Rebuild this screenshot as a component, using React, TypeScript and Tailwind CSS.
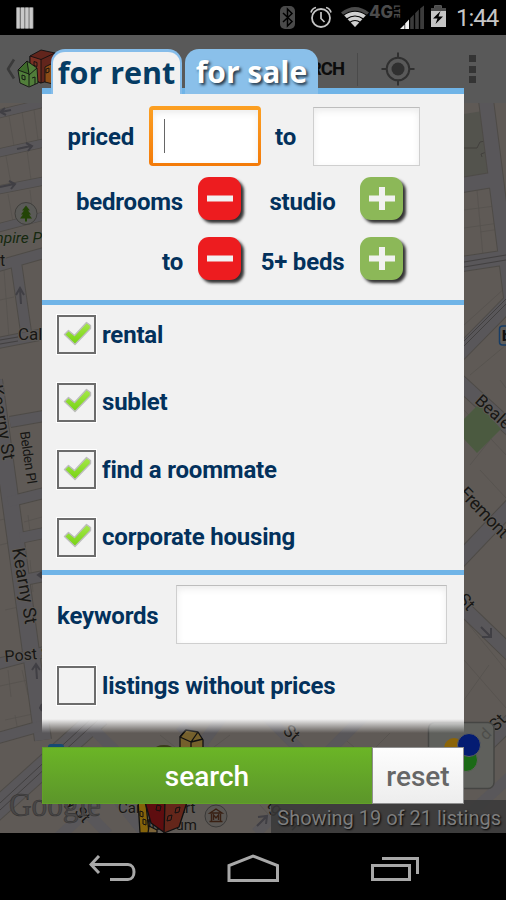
import React, { useState } from 'react';
import clsx from 'clsx';

interface RentalType {
  id: string;
  label: string;
}

const RENTAL_TYPES: RentalType[] = [
  { id: 'rental', label: 'rental' },
  { id: 'sublet', label: 'sublet' },
  { id: 'roommate', label: 'find a roommate' },
  { id: 'corporate', label: 'corporate housing' },
];

const StatusBar = () => (
  <div className="flex h-[35px] shrink-0 items-center bg-black pl-4">
    <svg width="18" height="22" viewBox="0 0 18 22">
      <rect x="0.5" y="0.5" width="17" height="21" fill="#777" />
      {[0.5, 5, 9.3, 13.6].map((x) => (
        <rect key={x} x={x} y="0.5" width="3.2" height="21" fill="#c9c9c9" />
      ))}
    </svg>
    <svg className="ml-[240px]" width="178" height="35" viewBox="274 0 178 35" fill="none">
      <rect x="280" y="6" width="15" height="23" rx="5" fill="#4a4a4a" />
      <path d="M283 13l9 8.5-4.5 4.5V9l4.5 4.5-9 8.5" stroke="#000" strokeWidth="1.5" />
      <circle cx="321" cy="18" r="9" stroke="#c4c4c4" strokeWidth="1.8" />
      <path d="M321 12v6.5l3.5 3.5M311 12.5q1-4 5-5M331 12.5q-1-4-5-5" stroke="#c4c4c4" strokeWidth="1.7" />
      <path d="M341 12.5q14-11 28 0L355 27z" fill="#4a4a4a" />
      <path d="M344 15q11-8 22 0L355 27z" fill="#d0d0d0" />
      <path d="M343 15.5q12-8.5 24 0M346.5 19q8.5-6 17 0M349.5 22.5q5.5-4 11 0" stroke="#000" strokeWidth="1.2" />
      <text x="369" y="18" fontFamily="Inter, sans-serif" fontWeight="800" fontSize="17" textLength="24" lengthAdjust="spacingAndGlyphs" fill="#4b4b4b">4G</text>
      <text transform="translate(394 5) rotate(90)" fontFamily="Inter, sans-serif" fontWeight="800" fontSize="8" textLength="13" lengthAdjust="spacingAndGlyphs" fill="#4b4b4b">LTE</text>
      <path d="M400 29l4.5-4.5V29zM405.2 23.5l3.800-4V29h-3.800z" fill="#f0f0f0" />
      <path d="M410.2 18.300l3.600-3.800V29h-3.600zM415.2 13.300l3.600-3.800V29h-3.600zM420.2 8.500l3.800-3V29h-3.800z" fill="#3b3b3b" />
      <path d="M431 8h3.500V5.500h7V8h4.500v19h-15z" fill="#c4c4c4" />
      <path d="M431 8h3.500V5.500h7V8h4.500v3h-15z" fill="#4a4a4a" />
      <path d="M440.500 11l-7.500 7.500h4.500l-2 5.500 7.500-7.500h-4.500z" fill="#000" />
    </svg>
    <span className="ml-[4px] font-['Roboto',sans-serif] text-[24px] leading-none tracking-[-1px] text-[#c6c6c6]">
      1:44
    </span>
  </div>
);

const ActionBar = () => (
  <div className="flex h-[68px] shrink-0 items-center bg-[#595959]">
    <svg width="60" height="68" viewBox="0 35 60 68" stroke="#111" strokeWidth="0.9" strokeLinejoin="round">
      <path d="M14 59.500l-6 9.500 6 9.500" fill="none" stroke="#3a3a3a" strokeWidth="2.600" />
      <path d="M30 56l11-6 14 3v26l-14 4-11-5z" fill="#62251c" />
      <path d="M30 56l11 3.500V83l-11-5z" fill="#7a3023" />
      <path d="M41 59.500L55 53M34 61.500l3 1v4l-3-1z" fill="none" />
      <path d="M45 67l8-4v21l-8-2z" fill="#8c4c16" />
      <path d="M18 70l9-9 10 7 1 15-9 4-9-4z" fill="#517e3a" />
      <path d="M18 70l9-9 2 13z" fill="#3e6b2b" />
      <path d="M29 75l8-7M29 74v12M22 75l3 1v4l-3-1zM32 78l3-1v7M46 69l3-1v4l-3 1z" fill="none" />
    </svg>
    <span className="ml-[203px] w-[81px] text-right font-['Roboto',sans-serif] text-[18.5px] font-bold leading-none tracking-[-1px] text-[#0c0c0c]">
      SEARCH
    </span>
    <div className="ml-[13px] h-[33px] w-px bg-[#4a4a4a]" />
    <svg className="ml-[23px]" width="34" height="34" viewBox="0 0 34 34" fill="none">
      <circle cx="17" cy="17" r="11.300" stroke="#303030" strokeWidth="2" />
      <circle cx="17" cy="17" r="6.500" fill="#303030" />
      <path d="M17 .5v5.500M17 28v5.500M.5 17H6M28 17h5.500" stroke="#303030" strokeWidth="2" />
    </svg>
    <div className="ml-[54px] flex flex-col gap-[3.5px]">
      <div className="size-[7px] bg-[#343434]" />
      <div className="size-[7px] bg-[#343434]" />
      <div className="size-[7px] bg-[#343434]" />
    </div>
  </div>
);

const CityMap = () => (
  <svg className="block" width="506" height="730" viewBox="0 103 506 730" fontFamily="Roboto, sans-serif">
    <rect y="103" width="506" height="730" fill="#5f5a56" />
    {/* parcel outlines */}
    <g stroke="#56524e" strokeWidth="0.8" fill="none">
      <path d="M9 116l5 30M22 112l5 32M34 110l4 30M6 156l5 28M27 150l4 30M8 194l5 28M30 190l3 28M0 300l14-3M4 270l5 68M28 515l3 25M24 522l18-5M30 560l3 32M27 575l15-4M0 520l14-3M0 545l16-4M5 610l18-4M8 670l3 27M0 686l28-6M15 715l4 22M5 720l28-6M22 670l6 25" />
      <path d="M464 210l31-4M477 190l6 66M464 228l35-5M480 232l20-3M464 325l42-38M470 375l36-30M464 410l42 45M480 470l26 28M490 440l-20 25M500 380l6 8M465 620l41 50M464 700l25-35M464 660l42 48" />
      <path d="M160 735l25 20M230 735l-20 15M300 745l-25-15M340 735l15 13M390 733l-15 15M130 805l25 27M170 805l-25 27M260 805l25 28M320 805l-25 28" />
    </g>
    <path d="M464 114l19-3 10 64-29 6z" fill="#53534d" />
    <path d="M464 148h13l3-6 10-2M489 151l-8 3 1 3" stroke="#42403d" fill="none" />
    {/* street casings */}
    <g stroke="#4e4b47" fill="none">
      <path strokeWidth="9" d="M-2 114L44 103M-2 153L44 143M-2 190L44 181M-2 228L44 216" />
      <path strokeWidth="12" d="M-2 266L44 253M16 262L26 332M-2 343L44 334M10 422L44 416" />
      <path strokeWidth="18" d="M-6 380L43 740" />
      <path strokeWidth="12" d="M8 502L44 493M20 538L44 533M24 580L44 576M-2 664L44 652M-2 738L48 724" />
      <path strokeWidth="16" d="M486 100L512 305M462 185L498 179M462 264L508 257M455 358L512 300M455 378L512 430" />
      <path strokeWidth="16" d="M455 565L512 505M455 600L512 655M440 790L512 720" />
      <path strokeWidth="22" d="M-10 815L100 716" />
    </g>
    <g stroke="#59575a" fill="none">
      <path strokeWidth="7.500" d="M-2 114L44 103M-2 153L44 143M-2 190L44 181M-2 228L44 216" />
      <path strokeWidth="10" d="M-2 266L44 253M16 262L26 332M-2 343L44 334M10 422L44 416" />
      <path strokeWidth="16" d="M-6 380L43 740" />
      <path strokeWidth="10" d="M8 502L44 493M20 538L44 533M24 580L44 576M-2 664L44 652M-2 738L48 724" />
      <path strokeWidth="14" d="M486 100L512 305M462 185L498 179M462 264L508 257M455 358L512 300M455 378L512 430" />
      <path strokeWidth="14" d="M455 565L512 505M455 600L512 655M440 790L512 720" />
      <path strokeWidth="20" d="M-10 815L100 716" />
      <path strokeWidth="11" d="M92 728L145 780M180 725L220 765M235 700L190 760M265 715L320 770M380 700L320 760M50 845L110 790L150 840M75 800L108 834M256 833L300 790M430 850L512 775" />
    </g>
    <g stroke="#3f3d3d" strokeWidth="0.9" fill="none">
      <path d="M0 340l18-3M0 344l18-3M464 262l42-7M464 267l42-7M464 341l42-42M464 346l42-42M0 803L92 718M0 810L98 720" />
    </g>
    <path d="M464 419l15-15 22 25-24 24-13-14z" fill="#4b5a40" />
    {/* one-way arrows */}
    <g stroke="#403f44" strokeWidth="2" fill="none">
      <path d="M11 110L1 112m4-4l-5 4 6 3M17 149l14-3m-5-3l6 3-4 5M0 187l14-3m-5-3l6 3-4 5M21 304l-1-15m-4 6l4-7 4 7M37 679l-1-14m-4 5l4-6 4 6M481 627l9 9m1-8v9h-9M257 826l9-9m-8 0l9-1-1 8" />
      <path d="M42 572l-4 3 4 3M42 704l-2 4 2 3" fill="#403f44" />
    </g>
    <circle cx="26" cy="213.500" r="11" fill="#5a5a57" stroke="#3f3e3b" />
    <path d="M26 205.500l-4 5h2l-3 4h2l-3 4h5v3h2v-3h5l-3-4h2l-3-4h2z" fill="#234407" />
    <g fill="#171614" stroke="#5f5c58" strokeWidth="1.800" paintOrder="stroke">
      <text x="-18" y="243" fontSize="15.500" fontStyle="italic" fill="#16280f">Empire Park</text>
      <text x="0" y="266" fontSize="16">t</text>
      <text x="18" y="340" fontSize="17">California St</text>
      <text x="5" y="662" fontSize="16" transform="rotate(-5 5 662)">Post St</text>
      <text fontSize="18" transform="translate(12 549) rotate(80)" textLength="77">Kearny St</text>
      <text fontSize="13.500" transform="translate(20 432) rotate(82)" textLength="53">Belden Pl</text>
      <text fontSize="18" transform="translate(-10 386) rotate(80)">Kearny St</text>
      <text fontSize="17" transform="translate(474 402) rotate(42)">Beale St</text>
      <text fontSize="18" transform="translate(458 494) rotate(46)" textLength="63">Fremont</text>
      <text fontSize="17" transform="translate(457 600) rotate(47)">St</text>
      <text fontSize="17" transform="translate(496 732) rotate(-45)">St</text>
      <text fontSize="17" transform="translate(282 732) rotate(42)">St</text>
      <text fontSize="16" transform="translate(66 804) rotate(48)">y St</text>
      <text fontSize="16" transform="translate(266 806) rotate(43)">tgom</text>
      <text x="118" y="813" fontSize="15">Cartoon Art</text>
      <text x="197" y="830" fontSize="15" textAnchor="end">Museum</text>
    </g>
    <text x="9" y="816" fontSize="33" fontFamily="Liberation Serif, serif" fill="#4a4848" stroke="#343333" strokeWidth="0.600" textLength="92" lengthAdjust="spacingAndGlyphs">Google</text>
    <rect x="499.500" y="326" width="14" height="19" rx="3" fill="#5f5d5a" stroke="#173d66" strokeWidth="1.500" />
    <text x="502" y="341" fontSize="15" fontWeight="900" fill="#111">b</text>
    <rect x="48" y="744" width="16" height="12" rx="3" fill="#164a73" />
    <ellipse cx="164" cy="750" rx="10" ry="5" fill="#3a3a1d" />
    {/* listing marker */}
    <g stroke="#111" strokeWidth="1.300" strokeLinejoin="round">
      <path d="M180 737l6-7 12 2 5 8v14h-23z" fill="#75602c" />
      <path d="M180 737l11 5 12-3M191 742v10M198 732l-7 10M186 730l-6 7" fill="none" />
      <path d="M138 800l8 4 3 29h-9z" fill="#85630a" />
      <path d="M145 802h20v31l-14-10z" fill="#5e0d0f" />
      <path d="M165 802h22l-8 25-15 6z" fill="#64261a" />
      <path d="M149 826l8 4v3h-9z" fill="#7b6338" />
      <path d="M157 805l4 1-1 5-4-1zM176 808l4-1-1 5-4 1zM168 816l4-1-1 5-4 1zM140 811l3 1v5l-3-1zM143 819l3 1v5l-3-1z" fill="none" strokeWidth="1" />
    </g>
    <circle cx="216" cy="816" r="11" fill="#5a5754" stroke="#3a3938" />
    <path d="M210 813l6-4 6 4zM211.500 814v7M220.500 814v7M209.500 821.500h13M213.500 820v-5l2.500 3 2.500-3v5" fill="none" stroke="#392013" strokeWidth="1.400" />
    {/* layers button */}
    <rect x="428.500" y="722.500" width="65.500" height="66" rx="6" fill="#5f605c" stroke="#454543" strokeWidth="1.500" />
    <text fontSize="16" fill="#4d4d4a" transform="translate(486 741) rotate(-45)">d</text>
    <circle cx="454" cy="748" r="10" fill="#8b6408" />
    <circle cx="466" cy="760" r="11.500" fill="#1b6a16" stroke="#5f605c" />
    <circle cx="469" cy="745" r="11.500" fill="#041c72" stroke="#5f605c" />
  </svg>
);

const NavBar = () => (
  <div className="flex h-[67px] shrink-0 items-center bg-black pt-1 pl-[89px]">
    <svg width="47" height="27" viewBox="0 0 47 27" fill="none" stroke="#a8a8a8" strokeWidth="3">
      <path d="M10 1L2 9.500l8 8.500M2 9.500h37c8 0 8 15 0 15H21" />
    </svg>
    <svg className="ml-[91px]" width="52" height="30" viewBox="0 0 52 30" fill="none" stroke="#a8a8a8" strokeWidth="3">
      <path d="M2 26.500V11.500L26 2l24.500 9.500v15z" />
    </svg>
    <svg className="ml-[92px]" width="48" height="26" viewBox="0 0 48 26" fill="none" stroke="#a8a8a8" strokeWidth="3">
      <path d="M1.500 9.500h37v14h-37zM11 2.500h35.500V18" />
    </svg>
  </div>
);

interface StepButtonProps {
  kind: 'minus' | 'plus';
  onClick: () => void;
}

const StepButton: React.FC<StepButtonProps> = ({ kind, onClick }) => (
  <button
    onClick={onClick}
    className={clsx(
      'flex size-[43px] shrink-0 items-center justify-center rounded-[11px] shadow-[3px_3px_3px_#333]',
      kind === 'minus' ? 'bg-[#ed1c1f]' : 'bg-[#8cb858]'
    )}
  >
    <svg width="26" height="23" viewBox="0 0 26 23" fill="#f1f1f1">
      <rect y="8.500" width="26" height="6" />
      {kind === 'plus' && <rect x="10" width="6" height="23" />}
    </svg>
  </button>
);

interface CheckRowProps {
  label: string;
  checked: boolean;
  onToggle: () => void;
}

const CheckRow: React.FC<CheckRowProps> = ({ label, checked, onToggle }) => (
  <button onClick={onToggle} className="flex h-[39px] items-center gap-[6px]">
    <span className="flex size-[39px] items-center justify-center border-2 border-[#6c6c6c] bg-[#f2f2f2] outline-1 outline-white">
      {checked && (
        <svg width="29" height="25" viewBox="0 0 29 25" className="mt-[-3px] ml-[2px]">
          <defs>
            <linearGradient id="tick" x1="0" y1="0" x2="0" y2="1">
              <stop offset="0" stopColor="#a6e84a" />
              <stop offset="1" stopColor="#76d313" />
            </linearGradient>
          </defs>
          <path d="M1.500 13.500l4-4 6 5L23.500 1.500l4 3v3L12 23.500z" fill="url(#tick)" stroke="#bdbdbd" strokeWidth="1.400" strokeLinejoin="round" />
        </svg>
      )}
    </span>
    <span className="text-[24px] leading-none tracking-[-0.2px]">{label}</span>
  </button>
);

const INPUT = 'border border-[#cfcfcf] border-t-[#bdbdbd] bg-white shadow-[inset_0_3px_7px_#ececec] outline-none';

const BED_LABELS = ['studio', '1 bed', '2 beds', '3 beds', '4 beds', '5+ beds'];

const SearchDialog = () => {
  const [minBeds, setMinBeds] = useState(0);
  const [maxBeds, setMaxBeds] = useState(5);
  const [noPrice, setNoPrice] = useState(false);
  const [types, setTypes] = useState<string[]>(RENTAL_TYPES.map((t) => t.id));

  const toggleType = (id: string) => {
    setTypes(types.includes(id) ? types.filter((t) => t !== id) : [...types, id]);
  };

  const reset = () => {
    setMinBeds(0);
    setMaxBeds(5);
    setNoPrice(false);
    setTypes(RENTAL_TYPES.map((t) => t.id));
  };

  return (
    <div className="absolute top-[49px] left-[42px] w-[422px] font-['Roboto',sans-serif] font-bold text-[#03315c]">
      <div className="flex h-[45px] gap-[3px] bg-[linear-gradient(to_top,#70b4e7_6px,transparent_6px)] pl-[9px] font-['Open_Sans',sans-serif] text-[30px] leading-none">
        <div className="flex w-[131px] items-center justify-center rounded-t-[14px] border-x-[2.5px] border-t-[3px] border-[#86bdea] bg-[#f1f1f1] pb-[2px] text-[#053c64]">
          <span className="text-[30.5px] whitespace-nowrap">for rent</span>
        </div>
        <div className="flex w-[133px] items-center justify-center rounded-t-[14px] bg-[#8ac0ea] pt-px text-white [text-shadow:2px_2px_3px_#234]">
          <span className="whitespace-nowrap">for sale</span>
        </div>
      </div>

      <div className="h-[206px] bg-[#f1f1f1] pt-3 text-[24px] leading-none tracking-[-0.2px]">
        <div className="flex h-[60px] items-center">
          <span className="w-[92px] pt-[2px] text-right">priced</span>
          <div className="ml-[15px] flex h-[60px] w-[112px] items-center rounded-[4px] bg-linear-to-b from-[#fca022] to-[#f37a08] p-[3.5px]">
            <div className="flex h-full w-full items-center bg-white pl-[11px] shadow-[inset_0_3px_7px_#ececec]">
              <div className="h-[34px] w-px bg-[#666]" />
            </div>
          </div>
          <span className="ml-[14px] w-[21px] pt-[2px] text-right">to</span>
          <input className={clsx(INPUT, 'ml-[17px] h-[59px] w-[107px]')} />
        </div>
        <div className="mt-[11px] flex h-[43px] items-center">
          <span className="w-[141px] pt-[6px] text-right">bedrooms</span>
          <div className="ml-[15px]">
            <StepButton kind="minus" onClick={() => setMinBeds(Math.max(0, minBeds - 1))} />
          </div>
          <span className="w-[123px] pt-[6px] text-center">{BED_LABELS[minBeds]}</span>
          <div className="-ml-[4px]">
            <StepButton kind="plus" onClick={() => setMinBeds(Math.min(5, minBeds + 1))} />
          </div>
        </div>
        <div className="mt-[17px] flex h-[43px] items-center">
          <span className="w-[141px] pt-[6px] text-right">to</span>
          <div className="ml-[15px]">
            <StepButton kind="minus" onClick={() => setMaxBeds(Math.max(0, maxBeds - 1))} />
          </div>
          <span className="w-[123px] pt-[6px] text-center">{BED_LABELS[maxBeds]}</span>
          <div className="-ml-[4px]">
            <StepButton kind="plus" onClick={() => setMaxBeds(Math.min(5, maxBeds + 1))} />
          </div>
        </div>
      </div>
      <div className="h-[5px] bg-[#70b4e7]" />

      <div className="flex h-[265px] flex-col gap-[28.5px] bg-[#f1f1f1] pt-[10px] pl-[15px]">
        {RENTAL_TYPES.map((type) => (
          <CheckRow
            key={type.id}
            label={type.label}
            checked={types.includes(type.id)}
            onToggle={() => toggleType(type.id)}
          />
        ))}
      </div>
      <div className="h-[5px] bg-[#70b4e7]" />

      <div className="h-[144px] bg-[#f1f1f1] pt-[10px] pl-[15px]">
        <div className="mb-[22px] flex h-[59px] items-center">
          <span className="w-[119px] pt-[2px] text-[24px] leading-none tracking-[-0.2px]">keywords</span>
          <input className={clsx(INPUT, 'h-[59px] w-[271px]')} />
        </div>
        <CheckRow label="listings without prices" checked={noPrice} onToggle={() => setNoPrice(!noPrice)} />
      </div>
      <div className="h-[14px] bg-linear-to-b from-[#f1f1f1] to-transparent" />

      <div className="mt-[14px] flex h-[57px] text-[28px] leading-none font-medium">
        <button className="w-[330px] border border-[#62a028] bg-linear-to-b from-[#6bb526] to-[#5c962a] pt-[2px] text-white">
          search
        </button>
        <button
          onClick={reset}
          className="w-[92px] border-[1.5px] border-[#8f8f8f] bg-linear-to-b from-[#fdfdfd] to-[#ededed] pt-[2px] text-[#666]"
        >
          reset
        </button>
      </div>
    </div>
  );
};

export default function App() {
  return (
    <div className="relative flex h-[900px] w-[506px] flex-col overflow-hidden bg-black">
      <StatusBar />
      <ActionBar />
      <CityMap />
      <NavBar />
      <div className="absolute top-[800px] right-0 flex h-[33px] w-[235px] items-center justify-end bg-[#383838]/85 pt-[3px] pr-[5px] font-['Roboto',sans-serif] text-[20px] leading-none whitespace-nowrap text-[#7d7d7d] [text-shadow:1px_1px_2px_#000]">
        Showing 19 of 21 listings
      </div>
      <SearchDialog />
    </div>
  );
}
